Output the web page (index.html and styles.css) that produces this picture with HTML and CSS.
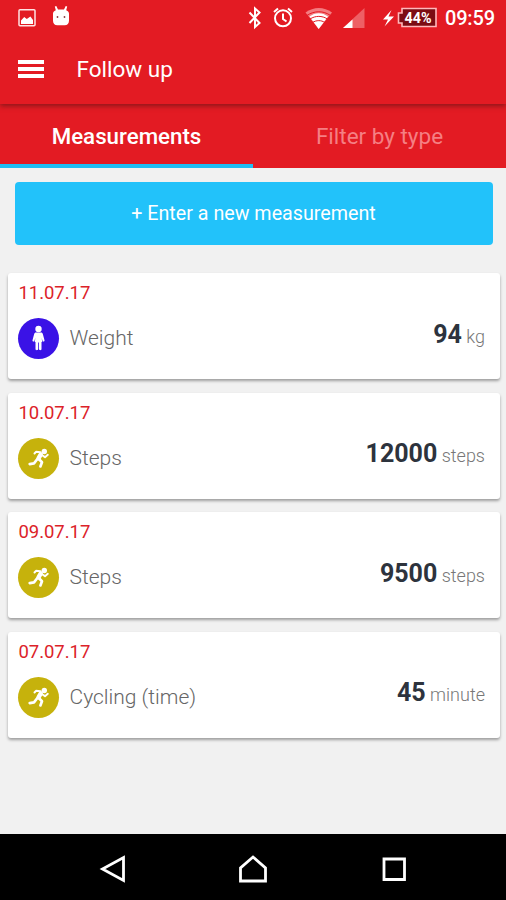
FILE: index.html
```html
<!DOCTYPE html>
<html lang="en">
<head>
  <meta charset="UTF-8" />
  <meta name="viewport" content="width=device-width, initial-scale=1.0"/>
  <title>Follow up</title>
  <link rel="stylesheet" href="styles.css">
</head>
<body>

  <!-- icons shared by the cards -->
  <svg class="sprite" width="0" height="0">
    <symbol id="person" viewBox="0 0 41 41">
      <circle cx="20.5" cy="11" r="3.2"/>
      <path d="M18 14.6h5c1 0 1.6.6 1.900 1.600l1.600 6c.3 1.300-1.500 1.800-1.900.7L23.700 20l.5 4h-.7V31c0 1.600-2.600 1.600-2.600 0V24.500h-.8V31c0 1.600-2.600 1.600-2.600 0V24h-.7l.5-4-.9 2.900c-.4 1.100-2.200.6-1.900-.7l1.600-6c.3-1 .9-1.600 1.900-1.600z"/>
    </symbol>
    <symbol id="runner" viewBox="0 0 41 41">
      <circle cx="26.3" cy="13.5" r="2.7"/>
      <g fill="none" stroke="#fff" stroke-linecap="round" stroke-linejoin="round">
        <path stroke-width="2" d="M16.500 15.500l1.500-1.700 4.500.4M24.500 17.500l2.500 1.700 2.800-2.400"/>
        <path stroke-width="4.4" d="M22.800 16.300l-2.300 4"/>
        <path stroke-width="2.7" d="M20.800 21l3.200 3.200-1.600 4.200M19 21.500l-3 3.800-4.300.8"/>
      </g>
    </symbol>
  </svg>

  <header>
    <div class="status">
      <svg width="506" height="36" viewBox="0 0 506 36">
        <rect x="19" y="9.7" width="16" height="16" rx="1" fill="none" stroke="#ffe3e3" stroke-width="1.5"/>
        <path fill="#fff" d="M21 24v-3.500l3.200-3.500 2.600 2 3.600-2.500 2.600 3.500v4z"/>
        <path fill="#fff" d="M56.300 6l1.700 3.500h6L65.700 6l1.500.5-1 3.700c2 .8 2.800 1.800 2.800 3.600v6.600c0 2.800-1.500 4.800-4.400 4.800h-7.200c-2.900 0-4.400-2-4.400-4.800v-6.600c0-1.800.8-2.800 2.800-3.600l-1-3.700z"/>
        <circle cx="57.5" cy="17" r=".9" fill="#8a3a40"/>
        <circle cx="64.5" cy="17" r=".9" fill="#8a3a40"/>

        <path class="line" d="M249.500 12.500l10 10.500-4.500 4V8.500l4.500 4-10 10.500"/>
        <circle class="line" cx="283" cy="18.3" r="8"/>
        <path class="line" d="M274 12l4-3.500M292 12l-4-3.500M283 13.500v5.500l3.500 2.500"/>

        <path fill="#f47c80" d="M305.500 12.500c8-6 18.500-6 26.500 0L318.700 29z"/>
        <path fill="#fff" d="M309.500 16.500c5.500-4.500 13-4.500 18.500 0L318.700 29z"/>
        <path fill="none" stroke="#e31b23" stroke-width="1" d="M307 15.500c7-5 16.500-5 23.500 0M310 19c5.500-3.500 12-3.500 17.500 0M312.500 22.500c4-2.500 8.500-2.500 12.500 0"/>
        <path fill="#ee6065" d="M364.500 8v20H343z"/>
        <path fill="#fff" d="M352.500 19.500V28H343z"/>

        <path fill="#fff" d="M391.500 10l-8.500 9.500h5l-3.500 7 9.500-10h-5.500z"/>
        <path fill="#7c0c13" stroke="#ffb9bc" stroke-width="1.6" d="M402 8.500h34V26.500h-34v-3.500h-3.500V13h3.500z"/>
        <text class="percent" x="404.5" y="22.5" textLength="27" lengthAdjust="spacingAndGlyphs">44%</text>
        <text class="clock" x="445" y="25" textLength="50">09:59</text>
      </svg>
    </div>
    <div class="bar">
      <div class="burger"><i></i><i></i><i></i></div>
      <h1>Follow up</h1>
    </div>
  </header>

  <nav class="tabs">
    <a class="tab active">Measurements</a>
    <a class="tab">Filter by type</a>
  </nav>

  <main>
    <button class="enter">+ Enter a new measurement</button>

    <div class="cards">
      <div class="card">
        <div class="date">11.07.17</div>
        <div class="row">
          <svg class="icon weight"><use href="#person"/></svg>
          <span class="name">Weight</span>
          <span class="value"><b>94</b> kg</span>
        </div>
      </div>
      <div class="card">
        <div class="date">10.07.17</div>
        <div class="row">
          <svg class="icon"><use href="#runner"/></svg>
          <span class="name">Steps</span>
          <span class="value"><b>12000</b> steps</span>
        </div>
      </div>
      <div class="card">
        <div class="date">09.07.17</div>
        <div class="row">
          <svg class="icon"><use href="#runner"/></svg>
          <span class="name">Steps</span>
          <span class="value"><b>9500</b> steps</span>
        </div>
      </div>
      <div class="card">
        <div class="date">07.07.17</div>
        <div class="row">
          <svg class="icon"><use href="#runner"/></svg>
          <span class="name">Cycling (time)</span>
          <span class="value"><b>45</b> minute</span>
        </div>
      </div>
    </div>
  </main>

  <footer>
    <svg width="30" height="30" viewBox="0 0 30 30"><path d="M26.500 3.500v23L5.500 15z"/></svg>
    <svg width="30" height="30" viewBox="0 0 30 30"><path d="M2.500 27V14L15 3l12.500 11v13z"/></svg>
    <svg width="30" height="30" viewBox="0 0 30 30"><path d="M5 5h20.500v20.500H5z"/></svg>
  </footer>

</body>
</html>
```
FILE: styles.css
```css
* {
  box-sizing: border-box;
}
body {
  margin: 0;
  height: 900px;
  display: flex;
  flex-direction: column;
  overflow: hidden;
  font-family: Roboto, sans-serif;
  background-color: #f1f1f1;
}
.sprite {
  position: absolute;
}
header {
  height: 104px;
  background-color: #e31b23;
  box-shadow: 0 2px 5px rgba(80, 20, 20, 0.6);
  z-index: 1;
}
.status {
  height: 36px;
}
.status svg {
  display: block;
}
.line {
  fill: none;
  stroke: #fff;
  stroke-width: 2;
}
.percent {
  font-size: 14px;
  font-weight: bold;
  fill: #fff;
}
.clock {
  font-size: 20px;
  font-weight: 500;
  fill: #fff;
}
.bar {
  height: 66px;
  display: flex;
  align-items: center;
  padding-left: 18px;
}
.burger {
  width: 26px;
  margin-right: 32.5px;
}
.burger i {
  display: block;
  height: 4px;
  margin: 3px 0;
  background-color: #fff;
}
h1 {
  margin: 0;
  font-size: 22.5px;
  font-weight: 400;
  line-height: 28px;
  color: #fff;
}
.tabs {
  display: flex;
  height: 63.5px;
  background-color: #e31b23;
}
.tab {
  flex: 1;
  padding-top: 17.5px;
  text-align: center;
  font-size: 22.5px;
  line-height: 28px;
  color: #f57f83;
}
.tab.active {
  color: #fff;
  font-size: 22.3px;
  font-weight: 500;
  border-bottom: 4.5px solid #1fbdf2;
}
main {
  flex: 1;
  padding: 14.5px 6px 0 7.5px;
}
.enter {
  display: block;
  width: 478px;
  height: 63px;
  margin: 0 0 28px 7px;
  padding-bottom: 2px;
  border: none;
  border-radius: 4px;
  background-color: #22c2fa;
  color: #fff;
  font-family: inherit;
  font-size: 19.7px;
}
.cards {
  display: grid;
  gap: 13.5px;
}
.card {
  height: 106px;
  padding: 8px 15px 0 10px;
  background-color: #fff;
  border-radius: 3px;
  box-shadow: 0 2px 3px rgba(0, 0, 0, 0.35);
}
.date {
  padding: 1px 0 0 1px;
  font-size: 18.5px;
  line-height: 22px;
  letter-spacing: -0.05px;
  color: #dc2229;
}
.row {
  display: flex;
  align-items: center;
  margin-top: 14px;
  height: 41px;
}
.icon {
  width: 41px;
  height: 41px;
  border-radius: 50%;
  background-color: #c6b20c;
  fill: #fff;
}
.icon.weight {
  background-color: #3a12e6;
}
.name {
  flex: 1;
  padding-left: 11px;
  margin-top: -1px;
  font-size: 21px;
  font-weight: 300;
  color: #666;
}
.value {
  margin-top: -9px;
  font-size: 18px;
  font-weight: 300;
  color: #777;
}
.value b {
  font-size: 25px;
  font-weight: 700;
  color: #2d333d;
}
footer {
  height: 66px;
  display: flex;
  justify-content: center;
  align-items: center;
  gap: 111px;
  padding-top: 4px;
  background-color: #000;
}
footer svg {
  fill: none;
  stroke: #fff;
  stroke-width: 2.8;
}
```
